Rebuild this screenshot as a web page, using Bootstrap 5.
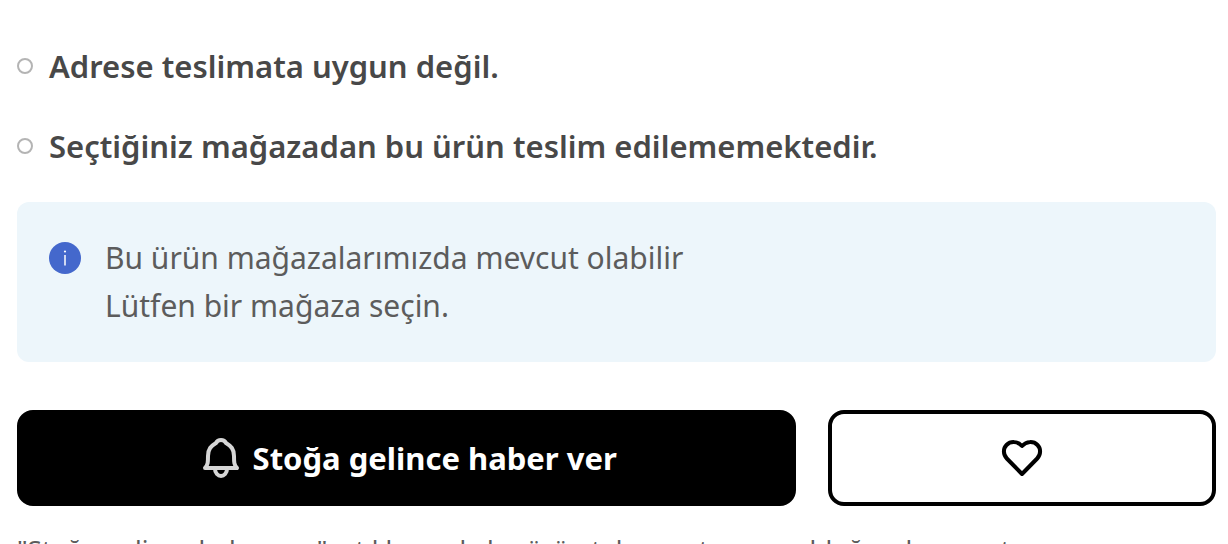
<!DOCTYPE html>
<html lang="tr">
<head>
<meta charset="utf-8">
<meta name="viewport" content="width=device-width, initial-scale=1">
<title>Teslimat seçenekleri</title>
<link href="https://cdn.jsdelivr.net/npm/bootstrap@5.3.0/dist/css/bootstrap.min.css" rel="stylesheet">
<style>
  body { font-family: "Noto Sans", sans-serif; font-size: 30px; line-height: 48px; color: #484848; background: #fff; }
  .delivery { padding: 42px 12px 32px 17px; }
  .delivery-list { gap: 32px; margin-bottom: 32px; font-size: 31px; font-weight: 600; }
  .delivery-item { gap: 16px; }
  .status-ring { width: 16px; height: 16px; border: 2px solid #b4b4b4; border-radius: 50%; }
  .stock-note { gap: 24px; padding: 32px; margin-bottom: 48px; border-radius: 12px; background: #edf6fb; color: #5c5c5c; }
  .stock-note svg { margin-top: 8px; }
  .actions { gap: 32px; margin-bottom: 22px; }
  .actions .btn { height: 96px; padding: 0; border: 4px solid #000; border-radius: 16px; }
  .btn-notify { flex: 0 0 65%; gap: 8px; font-size: 31px; font-weight: 700; line-height: 48px; }
  .btn-notify, .btn-notify:hover { background: #000; color: #fff; }
  .btn-favorite { flex: 1 1 0; }
  .btn-favorite, .btn-favorite:hover { background: #fff; color: #000; }
  .notify-hint { font-size: 26px; line-height: 42px; color: #5c5c5c; }
</style>
</head>
<body>
<main class="delivery">
  <ul class="delivery-list list-unstyled d-flex flex-column">
    <li class="delivery-item d-flex align-items-center"><span class="status-ring flex-shrink-0"></span><span>Adrese teslimata uygun değil.</span></li>
    <li class="delivery-item d-flex align-items-center"><span class="status-ring flex-shrink-0"></span><span>Seçtiğiniz mağazadan bu ürün teslim edilememektedir.</span></li>
  </ul>
  <div class="stock-note d-flex align-items-start" role="status">
    <svg class="flex-shrink-0" width="32" height="32" viewBox="0 0 32 32" aria-hidden="true">
      <circle cx="16" cy="16" r="16" fill="#4468cc"/>
      <path d="M16 13v10.500" stroke="#fff" stroke-width="1.500"/>
      <circle cx="16" cy="9.500" r="1.100" fill="#fff"/>
    </svg>
    <p class="mb-0">Bu ürün mağazalarımızda mevcut olabilir<br>Lütfen bir mağaza seçin.</p>
  </div>
  <div class="actions d-flex">
    <button type="button" class="btn btn-notify d-flex align-items-center justify-content-center">
      <svg width="48" height="48" viewBox="0 0 48 48" fill="none" stroke="#d6d6d6" stroke-width="4" stroke-linejoin="round" aria-hidden="true">
        <path d="M8 34c3-3 3-6 3-12 0-7 3-10 8-13 1-2 3-3 5-3s4 1 5 3c5 3 8 6 8 13 0 6 0 9 3 12z"/>
        <path d="M18 35c0 4 3 7 6 7s6-3 6-7"/>
      </svg>
      <span>Stoğa gelince haber ver</span>
    </button>
    <button type="button" class="btn btn-favorite d-flex align-items-center justify-content-center" aria-label="Favorilere ekle">
      <svg width="48" height="48" viewBox="0 0 48 48" fill="none" stroke="#000" stroke-width="4" stroke-linejoin="round" aria-hidden="true">
        <path d="M24 40 8.800 24.500C5 20.500 5 14.500 8.500 11 12.500 7 19.500 7 24 12c4.500-5 11.500-5 15.500-1 3.500 3.500 3.500 9.500-.3 13.500z"/>
      </svg>
    </button>
  </div>
  <p class="notify-hint mb-0">"Stoğa gelince haber ver" a tıklayarak, bu ürün tekrar satışa sunulduğunda e-posta gönderilecektir.</p>
</main>
<script src="https://cdn.jsdelivr.net/npm/bootstrap@5.3.0/dist/js/bootstrap.bundle.min.js"></script>
</body>
</html>
